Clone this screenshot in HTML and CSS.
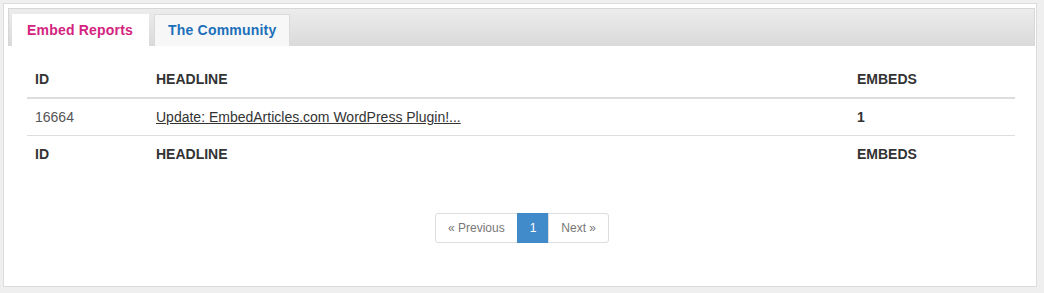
FILE: index.html
```html
<!DOCTYPE html>
<html>
<head>
<meta charset="utf-8">
<link rel="stylesheet" href="styles.css">
</head>
<body>
<div class="panel">
  <div class="tabbar">
    <div class="tab active">Embed Reports</div>
    <div class="tab">The Community</div>
  </div>
  <table class="report">
    <colgroup>
      <col class="c-id"><col class="c-head"><col class="c-emb">
    </colgroup>
    <thead>
      <tr><th>ID</th><th>HEADLINE</th><th>EMBEDS</th></tr>
    </thead>
    <tbody>
      <tr><td>16664</td><td><a href="#">Update: EmbedArticles.com WordPress Plugin!...</a></td><td class="num">1</td></tr>
    </tbody>
    <tfoot>
      <tr><th>ID</th><th>HEADLINE</th><th>EMBEDS</th></tr>
    </tfoot>
  </table>
  <div class="pager">
    <ul class="pagination">
      <li><span>&laquo; Previous</span></li>
      <li class="current"><span>1</span></li>
      <li><span>Next &raquo;</span></li>
    </ul>
  </div>
</div>
</body>
</html>
```
FILE: styles.css
```css
html, body {
  margin: 0;
  padding: 0;
  background: #efefef;
  font-family: "Liberation Sans", Arial, sans-serif;
  font-size: 14px;
  color: #333;
}
.panel {
  margin: 3px 0 0 3px;
  border: 1px solid #dcdcdc;
  background: #fff;
  padding: 4px 0 0 4px;
  width: 1028px;
  height: 278px;
}
.tabbar {
  display: flex;
  gap: 5px;
  height: 32px;
  padding: 5px 0 0 3px;
  border: 1px solid #d6d6d6;
  border-bottom: none;
  background: linear-gradient(#ececec, #dadada);
  width: 1022px;
}
.tab {
  width: 136px;
  height: 32px;
  box-sizing: border-box;
  border: 1px solid #dadada;
  border-bottom: none;
  background: #f7f7f7;
  color: #1c6fba;
  font-weight: bold;
  font-size: 14px;
  letter-spacing: 0.2px;
  line-height: 30px;
  padding-left: 13px;
}
.tab.active {
  width: 137px;
  background: #fff;
  border-color: #fff;
  color: #d3237f;
  padding-left: 14px;
}
.report {
  margin: 16px 0 0 19px;
  width: 988px;
  border-collapse: collapse;
  table-layout: fixed;
}
.c-id { width: 121px; }
.c-head { width: 701px; }
.c-emb { width: 166px; }
.report th, .report td {
  padding: 8px;
  line-height: 20px;
  text-align: left;
  vertical-align: top;
  font-size: 14px;
}
.report th {
  font-weight: bold;
  color: #333;
}
.report thead th {
  border-bottom: 2px solid #dddddd;
  padding-top: 7px;
}
.report tbody td {
  border-bottom: 1px solid #dddddd;
  color: #555;
}
.report tbody td.num {
  font-weight: bold;
  color: #333;
}
.report a {
  color: #333;
  text-decoration: underline;
}
.pager {
  display: flex;
  justify-content: center;
  margin-top: 41px;
}
.pagination {
  display: flex;
  list-style: none;
  margin: 0;
  padding: 0;
}
.pagination li span {
  display: block;
  padding: 5px 10px;
  line-height: 18px;
  font-size: 12px;
  color: #777;
  border: 1px solid #dddddd;
  margin-left: -1px;
  background: #fff;
}
.pagination li:first-child span {
  margin-left: 0;
  border-radius: 3px 0 0 3px;
  padding: 5px 12px;
}
.pagination li:last-child span {
  border-radius: 0 3px 3px 0;
  padding: 5px 12px;
}
.pagination li.current span {
  background: #428bca;
  border-color: #428bca;
  color: #fff;
  padding: 5px 12px;
}
```
